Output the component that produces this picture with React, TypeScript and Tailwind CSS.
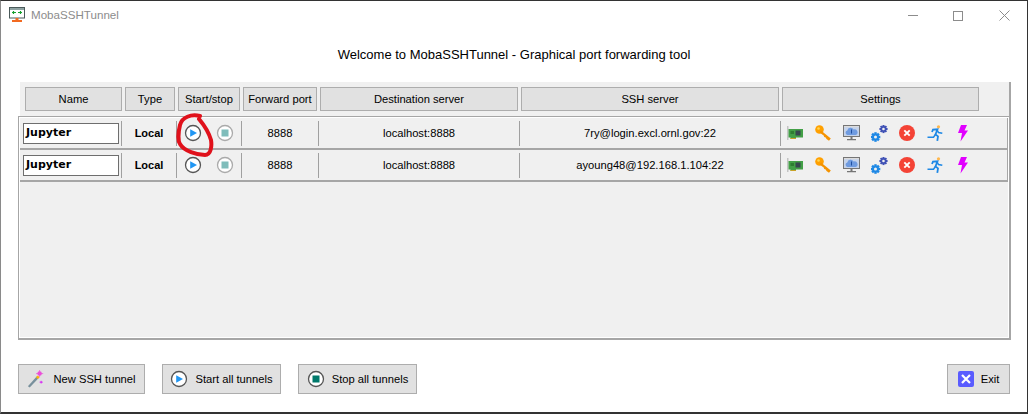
import type { ReactNode } from "react";

const columns = [
  { label: "Name", w: "w-[97px]" },
  { label: "Type", w: "w-[50px]" },
  { label: "Start/stop", w: "w-[62px]" },
  { label: "Forward port", w: "w-[74px]" },
  { label: "Destination server", w: "w-[198px]" },
  { label: "SSH server", w: "w-[258px]" },
  { label: "Settings", w: "w-[197px]" },
];

const tunnels = [
  { name: "Jupyter", type: "Local", port: "8888", dest: "localhost:8888", ssh: "7ry@login.excl.ornl.gov:22" },
  { name: "Jupyter", type: "Local", port: "8888", dest: "localhost:8888", ssh: "ayoung48@192.168.1.104:22" },
];

function PlayIcon() {
  return (
    <svg width="18" height="18" viewBox="0 0 18 18" aria-hidden="true">
      <circle cx="9" cy="9" r="7.5" fill="#fff" stroke="#555" strokeWidth="1.3" />
      <path d="M6.2 5.2 13 9l-6.8 3.8z" fill="#2196f3" />
    </svg>
  );
}

function StopIcon({ dim }: { dim?: boolean }) {
  return (
    <svg width="18" height="18" viewBox="0 0 18 18" aria-hidden="true">
      <circle cx="9" cy="9" r="7.5" fill="#fff" stroke={dim ? "#aaa" : "#555"} strokeWidth="1.3" />
      <rect x="5.5" y="5.5" width="7" height="7" fill={dim ? "#7fbdbb" : "#00796b"} />
    </svg>
  );
}

function CardIcon() {
  return (
    <svg width="16" height="16" viewBox="0 0 16 16" aria-hidden="true">
      <path d="M0 1h1.500v14H0z" fill="#c4c4c4" />
      <path d="M1.500 4H16v8.500H9v1.500H3.500v-1.500h-2z" fill="#43a047" />
      <rect x="8.500" y="5.500" width="5" height="5" fill="#37474f" />
      <rect x="3.500" y="6" width="3.500" height="3" fill="#2e7d32" />
      <path d="M3.500 13.500H9" stroke="#c9a227" strokeWidth="1" />
    </svg>
  );
}

function KeyIcon() {
  return (
    <svg width="16" height="16" viewBox="0 0 16 16" aria-hidden="true">
      <circle cx="4.500" cy="4.500" r="4.300" fill="#ffa000" />
      <path d="M6 5.500 15.800 13.500 14 15.800 11.500 14l-.8-1.500-1.500-.5-.5-1.500L4.500 7.500z" fill="#f59300" />
      <circle cx="3.500" cy="3.500" r="1.300" fill="#ffd54f" />
    </svg>
  );
}

function MonitorIcon() {
  return (
    <svg width="17" height="16" viewBox="0 0 17 16" aria-hidden="true">
      <rect x="0.500" y="0.500" width="16" height="11" fill="#c5d3ea" stroke="#757575" />
      <path d="M1 1h15v1.200H1z" fill="#dcdcdc" />
      <path d="M4.500 10a2.300 2.300 0 0 1-.2-4.500 3.400 3.400 0 0 1 6.300-1 2.800 2.800 0 0 1 2 5.500z" fill="#6f9be0" />
      <path d="M8.500 4.500V8.500" stroke="#1f4fa0" strokeWidth="1" />
      <path d="M7.500 12h2v2h-2zM4 14h9v1.200H4z" fill="#757575" />
    </svg>
  );
}

function GearShape({ cx, cy, r, color }: { cx: number; cy: number; r: number; color: string }) {
  const teeth = [0, 45, 90, 135];
  return (
    <g>
      {teeth.map((a) => (
        <rect
          key={a}
          x={cx - r * 0.3}
          y={cy - r * 1.2}
          width={r * 0.6}
          height={r * 2.4}
          fill={color}
          transform={`rotate(${a} ${cx} ${cy})`}
        />
      ))}
      <circle cx={cx} cy={cy} r={r * 0.85} fill={color} />
      <circle cx={cx} cy={cy} r={r * 0.38} fill="#f0f0f0" />
    </g>
  );
}

function GearsIcon() {
  return (
    <svg width="17" height="17" viewBox="0 0 17 17" aria-hidden="true">
      <GearShape cx={4.500} cy={12} r={4} color="#1e88e5" />
      <GearShape cx={12.500} cy={4} r={3.400} color="#3f51b5" />
    </svg>
  );
}

function CloseIcon() {
  return (
    <svg width="16" height="16" viewBox="0 0 16 16" aria-hidden="true">
      <circle cx="8" cy="8" r="8" fill="#f44336" />
      <path d="m5.300 5.300 5.400 5.400m0-5.400-5.400 5.400" stroke="#fff" strokeWidth="1.900" />
    </svg>
  );
}

function RunIcon() {
  return (
    <svg width="16" height="17" viewBox="0 0 16 17" aria-hidden="true">
      <circle cx="11.500" cy="1.800" r="1.600" fill="#ffb74d" />
      <path
        d="M5 7 6 4.700 10.500 4.300 8.500 9.500 11 11.300 10.300 15.800"
        fill="none"
        stroke="#1e88e5"
        strokeWidth="1.800"
      />
      <path d="M8.500 9.500 6.500 12.300 .5 12.300M10 4.800 11.500 7.500 15.300 8.300" fill="none" stroke="#1e88e5" strokeWidth="1.500" />
    </svg>
  );
}

function BoltIcon() {
  return (
    <svg width="10" height="17" viewBox="0 0 10 17" aria-hidden="true">
      <path d="M3 0h6L6.500 5.500H10L2.500 16.500l1.500-8.500H0z" fill="#e100ff" />
    </svg>
  );
}

function WandIcon() {
  return (
    <svg width="18" height="18" viewBox="0 0 20 20" aria-hidden="true">
      <path d="M1 18 11 7l2 2L3 19.500z" fill="#78909c" />
      <path d="m10 8 2-2 2 2-2 2z" fill="#ffb300" />
      <circle cx="14" cy="4" r="2.500" fill="#ea4fd8" />
      <path d="M14 0v8M10 4h8" stroke="#ea4fd8" strokeWidth="0.800" />
      <path d="M14 13.500h3.500M15.700 12v3" stroke="#d500f9" strokeWidth="0.900" />
    </svg>
  );
}

function ExitIcon() {
  return (
    <svg width="16" height="16" viewBox="0 0 16 16" aria-hidden="true">
      <rect width="16" height="16" rx="2" fill="#5a5cff" />
      <path d="m4 4 8 8m0-8-8 8" stroke="#fff" strokeWidth="2.200" />
    </svg>
  );
}

function AppIcon() {
  return (
    <svg width="17" height="17" viewBox="0 0 17 17" aria-hidden="true">
      <rect x="0.500" y="0.500" width="15" height="10.500" fill="#fff" stroke="#4a5a5a" />
      <path d="M1 1h14v2H1z" fill="#8fa3a3" />
      <path d="M3 5.500h4M9 5.500h4M4.500 4v3M11.500 4v3" stroke="#17a02e" strokeWidth="1.200" />
      <path d="M6.500 11h3v2h-3zM3 13h10v2H3z" fill="#f26a21" />
    </svg>
  );
}

function FooterButton({ icon, label, w, gap }: { icon: ReactNode; label: string; w: string; gap: string }) {
  return (
    <button className={`${w} ${gap} h-[30px] flex items-center justify-center bg-[#e1e1e1] border border-[#adadad] text-[11.200px] text-black`}>
      {icon}
      <span>{label}</span>
    </button>
  );
}

function Divider() {
  return <div className="w-[1px] h-[25px] bg-[#a0a0a0] shrink-0" />;
}

function Row({ t, annotated }: { t: (typeof tunnels)[number]; annotated?: boolean }) {
  return (
    <div className="h-[32px] flex items-center border-b-2 border-r border-[#a6a6a6] shrink-0">
      <div className="w-[101px] pl-[3px] shrink-0">
        <div className="w-[96px] h-[21px] bg-white border border-[#6e6e6e] pl-[2px] flex items-center font-['DejaVu_Sans'] font-bold text-[11px] text-black">
          {t.name}
        </div>
      </div>
      <Divider />
      <div className="w-[54px] shrink-0 text-center font-bold text-[11px] text-black">{t.type}</div>
      <Divider />
      <div className="relative w-[64px] shrink-0 flex items-center pl-[7px] gap-[14px]">
        <PlayIcon />
        <StopIcon dim />
        {annotated && (
          <svg className="absolute left-[-2px] top-[-11px]" width="40" height="46" viewBox="0 0 40 46" aria-hidden="true">
            <path
              d="M25 3C16 1 7 4 5 12 3 20 3 28 5 31c4 7 17 11 25 11 6 0 7-9 6-15C34 20 29 12 24 6"
              fill="none"
              stroke="#e0111b"
              strokeWidth="4"
              strokeLinecap="round"
            />
          </svg>
        )}
      </div>
      <Divider />
      <div className="w-[76px] shrink-0 text-center text-[11.200px] text-black">{t.port}</div>
      <Divider />
      <div className="w-[200px] shrink-0 text-center text-[11.200px] text-black">{t.dest}</div>
      <Divider />
      <div className="w-[260px] shrink-0 text-center text-[11.200px] text-black">{t.ssh}</div>
      <Divider />
      <div className="flex-1 flex items-center pl-[6px]">
        <div className="w-[28px] flex justify-start"><CardIcon /></div>
        <div className="w-[28px] flex justify-start"><KeyIcon /></div>
        <div className="w-[28px] flex justify-start"><MonitorIcon /></div>
        <div className="w-[28px] flex justify-start"><GearsIcon /></div>
        <div className="w-[28px] flex justify-start"><CloseIcon /></div>
        <div className="w-[31px] flex justify-start"><RunIcon /></div>
        <div className="flex justify-start"><BoltIcon /></div>
      </div>
    </div>
  );
}

export default function App() {
  return (
    <div className="w-[1028px] h-[414px] overflow-hidden bg-white border-t border-r border-b-2 border-l border-t-[#333] border-r-[#333] border-b-[#333] border-l-[#8a8a8a] flex flex-col font-['Liberation_Sans',sans-serif]">
      {/* Title bar */}
      <div className="h-[29px] flex items-center shrink-0 pl-[8px]">
        <AppIcon />
        <span className="ml-[5px] mb-[2px] text-[11.600px] text-[#8c8c8c]">MobaSSHTunnel</span>
        <div className="ml-auto flex items-center text-[#8c8c8c] pr-[17px]">
          <div className="w-[10px] h-[1px] bg-[#8c8c8c]" />
          <div className="ml-[35px] w-[10px] h-[10px] border border-[#8c8c8c]" />
          <svg className="ml-[36px]" width="11" height="11" viewBox="0 0 11 11" aria-hidden="true">
            <path d="m.5.500 10 10m0-10-10 10" stroke="#8c8c8c" strokeWidth="1" />
          </svg>
        </div>
      </div>

      <div className="h-[52px] shrink-0 pb-[2px] flex items-center justify-center text-[13px] text-black">
        Welcome to MobaSSHTunnel - Graphical port forwarding tool
      </div>

      {/* Column headers */}
      <div className="ml-[19px] w-[991px] h-[34px] shrink-0 bg-[#f0f0f0] flex items-start pt-[5px] pl-[5px] gap-[3px] border-r-2 border-[#a6a6a6]">
        {columns.map((c) => (
          <div
            key={c.label}
            className={`${c.w} h-[24px] shrink-0 flex items-center justify-center bg-[#e1e1e1] border border-[#adadad] text-[11.200px] text-black`}
          >
            {c.label}
          </div>
        ))}
      </div>

      {/* Tunnel list: grey outer edge, white inner edge */}
      <div className="ml-[17px] w-[993px] h-[224px] shrink-0 flex flex-col border-t border-l border-r-2 border-b-2 border-[#a6a6a6]">
        <div className="flex-1 flex flex-col bg-[#f0f0f0] border border-white">
          {tunnels.map((t, i) => (
            <Row key={i} t={t} annotated={i === 0} />
          ))}
        </div>
      </div>

      {/* Footer buttons */}
      <div className="mt-[24px] ml-[17px] w-[992px] flex items-center">
        <FooterButton icon={<WandIcon />} label="New SSH tunnel" w="w-[127px]" gap="gap-[8px]" />
        <div className="ml-[17px]">
          <FooterButton icon={<PlayIcon />} label="Start all tunnels" w="w-[119px]" gap="gap-[7px]" />
        </div>
        <div className="ml-[17px]">
          <FooterButton icon={<StopIcon />} label="Stop all tunnels" w="w-[119px]" gap="gap-[7px]" />
        </div>
        <div className="ml-auto">
          <FooterButton icon={<ExitIcon />} label="Exit" w="w-[63px]" gap="gap-[7px]" />
        </div>
      </div>
    </div>
  );
}
